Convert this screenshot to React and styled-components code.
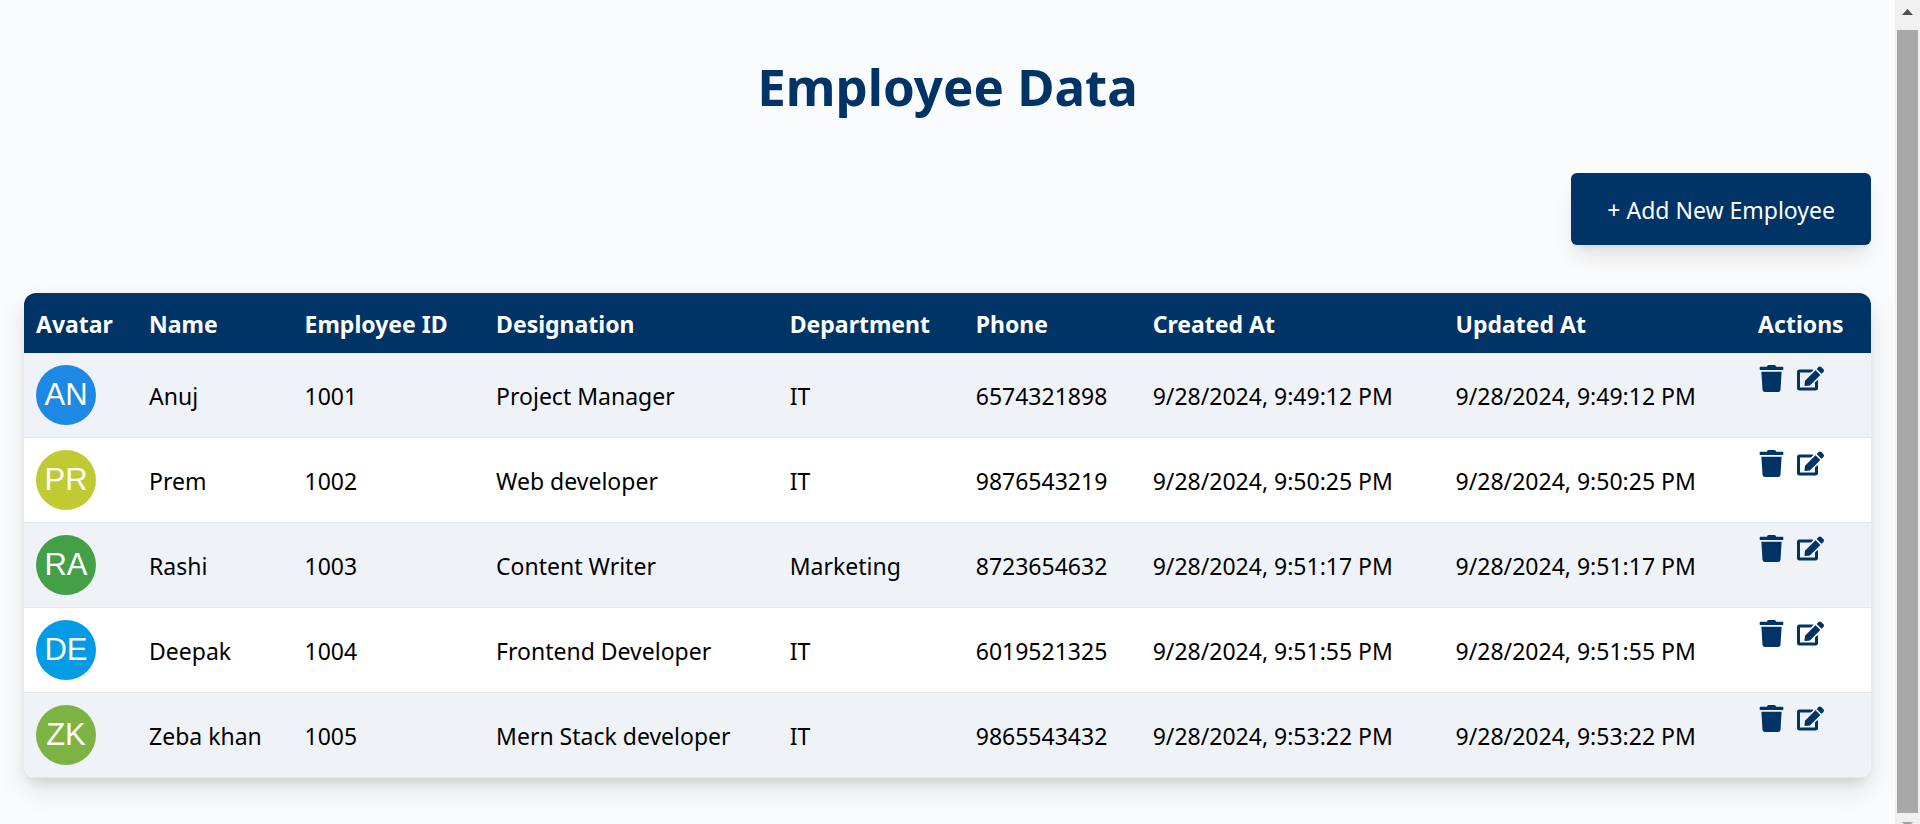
import React from "react";
import styled, { createGlobalStyle } from "styled-components";
import { FaTrash, FaEdit } from "react-icons/fa";

const GlobalStyle = createGlobalStyle`
  *, *::before, *::after { box-sizing: border-box; }
  body {
    margin: 0;
    background: #f9fbfd;
    color: #000;
    font-family: "Segoe UI", "Noto Sans", "Open Sans", sans-serif;
    font-size: 23px;
    line-height: 36px;
  }
`;

const Layout = styled.div`
  display: flex;
  align-items: flex-start;
  min-height: 100vh;
`;

const Page = styled.main`
  flex: 1;
  min-width: 0;
  padding: 48px 24px 44px;
`;

const Title = styled.h1`
  margin: 0;
  color: #003366;
  font-size: 51px;
  font-weight: 700;
  line-height: 77px;
  text-align: center;
`;

const Toolbar = styled.div`
  display: flex;
  justify-content: flex-end;
  margin: 48px 0;
`;

const AddButton = styled.button`
  height: 72px;
  padding: 2px 36px 0;
  border: 0;
  border-radius: 6px;
  background: #003366;
  color: #fff;
  font: inherit;
  cursor: pointer;
  box-shadow: 0 15px 22px -4px rgba(0, 0, 0, 0.1), 0 6px 9px -6px rgba(0, 0, 0, 0.1);
`;

const TableCard = styled.div`
  overflow: hidden;
  border-radius: 12px;
  background: #fff;
  box-shadow: 0 12px 30px rgba(0, 0, 0, 0.1), 0 8px 12px -4px rgba(0, 0, 0, 0.1);
`;

const Table = styled.table`
  width: 100%;
  table-layout: fixed;
  border-collapse: separate;
  border-spacing: 0;
`;

const HeadCell = styled.th`
  width: ${(p) => p.$width};
  height: 60px;
  padding: 2px 0 0 12px;
  background: #003366;
  color: #fff;
  font-weight: 700;
  text-align: left;
  white-space: nowrap;
`;

const Row = styled.tr`
  height: 85px;
  background: #fff;

  &:nth-child(odd) { background: #eff3f8; }
`;

const Cell = styled.td`
  padding: 2px 0 0 12px;
  border-bottom: 1px solid #e5e7eb;
  white-space: nowrap;
`;

const MediaCell = styled(Cell)`
  padding: 12px 0 12px 12px;
  vertical-align: top;
`;

const Avatar = styled.div`
  display: flex;
  align-items: center;
  justify-content: center;
  width: 60px;
  height: 60px;
  border-radius: 50%;
  background: ${(p) => p.$color};
  color: #fff;
  font-family: "Liberation Sans", Arial, sans-serif;
  font-size: 31px;
`;

const Actions = styled.div`
  display: flex;
  gap: 12px;
`;

const IconButton = styled.button`
  display: flex;
  padding: 0;
  border: 0;
  background: none;
  color: #003366;
  font-size: 27px;
  cursor: pointer;
`;

const ScrollRail = styled.div`
  position: sticky;
  top: 0;
  display: flex;
  flex-direction: column;
  width: 25px;
  height: 100vh;
  padding: 0 2px;
  background: #f0f0f0;
`;

const RailEnd = styled.div`
  display: flex;
  justify-content: center;
  height: ${(p) => p.$height};
  padding-top: 9px;
  overflow: hidden;
`;

const Arrow = styled.svg`
  flex: none;
  width: 11px;
  height: 6px;
  fill: ${(p) => p.$color};
`;

const Thumb = styled.div`
  flex: 1;
  background: #a8a8a8;
`;

const columns = [
  ["Avatar", "6.12%"],
  ["Name", "8.42%"],
  ["Employee ID", "10.37%"],
  ["Designation", "15.9%"],
  ["Department", "10.07%"],
  ["Phone", "9.58%"],
  ["Created At", "16.4%"],
  ["Updated At", "16.38%"],
  ["Actions", "6.76%"],
];

const employees = [
  { initials: "AN", color: "#1e88e5", name: "Anuj", id: "1001", role: "Project Manager", dept: "IT", phone: "6574321898", time: "9/28/2024, 9:49:12 PM" },
  { initials: "PR", color: "#c0ca33", name: "Prem", id: "1002", role: "Web developer", dept: "IT", phone: "9876543219", time: "9/28/2024, 9:50:25 PM" },
  { initials: "RA", color: "#43a047", name: "Rashi", id: "1003", role: "Content Writer", dept: "Marketing", phone: "8723654632", time: "9/28/2024, 9:51:17 PM" },
  { initials: "DE", color: "#039be5", name: "Deepak", id: "1004", role: "Frontend Developer", dept: "IT", phone: "6019521325", time: "9/28/2024, 9:51:55 PM" },
  { initials: "ZK", color: "#7cb342", name: "Zeba khan", id: "1005", role: "Mern Stack developer", dept: "IT", phone: "9865543432", time: "9/28/2024, 9:53:22 PM" },
];

export default function App() {
  return (
    <>
      <GlobalStyle />
      <Layout>
        <Page>
          <Title>Employee Data</Title>
          <Toolbar>
            <AddButton type="button">+ Add New Employee</AddButton>
          </Toolbar>
          <TableCard>
            <Table>
              <thead>
                <tr>
                  {columns.map(([label, width]) => (
                    <HeadCell key={label} $width={width} scope="col">{label}</HeadCell>
                  ))}
                </tr>
              </thead>
              <tbody>
                {employees.map((e) => (
                  <Row key={e.id}>
                    <MediaCell><Avatar $color={e.color}>{e.initials}</Avatar></MediaCell>
                    <Cell>{e.name}</Cell>
                    <Cell>{e.id}</Cell>
                    <Cell>{e.role}</Cell>
                    <Cell>{e.dept}</Cell>
                    <Cell>{e.phone}</Cell>
                    <Cell>{e.time}</Cell>
                    <Cell>{e.time}</Cell>
                    <MediaCell>
                      <Actions>
                        <IconButton type="button" aria-label={`Delete ${e.name}`}><FaTrash /></IconButton>
                        <IconButton type="button" aria-label={`Edit ${e.name}`}><FaEdit /></IconButton>
                      </Actions>
                    </MediaCell>
                  </Row>
                ))}
              </tbody>
            </Table>
          </TableCard>
        </Page>
        <ScrollRail aria-hidden="true">
          <RailEnd $height="30px">
            <Arrow $color="#505050" viewBox="0 0 11 6"><path d="M5.5 0 11 6H0z" /></Arrow>
          </RailEnd>
          <Thumb />
          <RailEnd $height="11px">
            <Arrow $color="#a3a3a3" viewBox="0 0 11 6"><path d="M0 0h11L5.5 6z" /></Arrow>
          </RailEnd>
        </ScrollRail>
      </Layout>
    </>
  );
}
